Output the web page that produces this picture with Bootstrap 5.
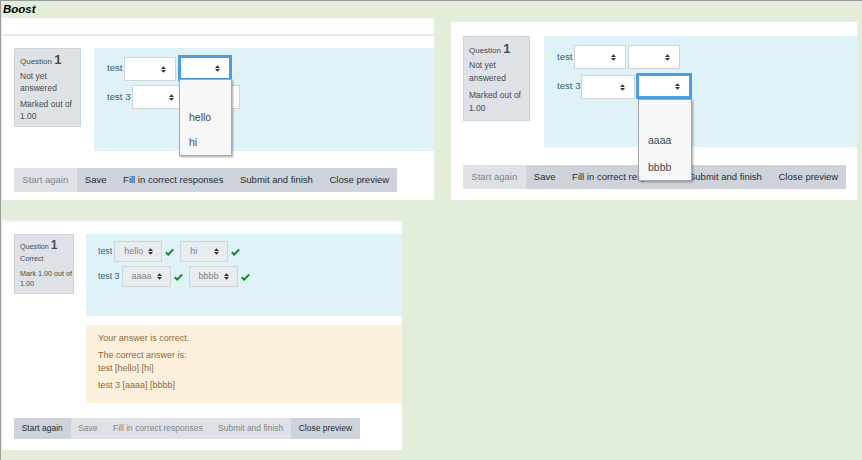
<!DOCTYPE html>
<html lang="en"><head><meta charset="utf-8"><title>Boost</title>
<link href="https://cdn.jsdelivr.net/npm/bootstrap@5.3.0/dist/css/bootstrap.min.css" rel="stylesheet">
<style>
html,body{height:460px;overflow:hidden}
body{background:#e2eeda;font-family:"Liberation Sans",Arial,sans-serif;color:#3a4047;position:relative;border-top:1px solid #9a9a9a;border-left:1px solid #9a9a9a}
.ttl{font:italic bold 11.5px/17px "Liberation Sans",sans-serif;color:#000;padding-left:2px;margin:0;height:17px}
.toprow{height:202px}
.pan{background:#fff;position:relative}
.p1{width:432px;height:182px;margin-left:1px;border-top:16px solid #fff}
.p1 .rule{height:2px;background:#e6e8ea}
.p1 .inner{padding:12px 0 0 12px}
.p2{width:406px;height:178px;margin-left:17px;margin-top:4px;padding:14px 0 0 12px}
.p3{width:400px;height:230px;margin-left:1px;border-top:2px solid #eef0f2;padding:12px 0 0 12px}
.infobox{background:#dee2e6;border:1px solid #ced4da;font-size:8.5px;line-height:12px;width:67px;height:79px;padding:4px 3px 0 5px;flex:none;align-self:flex-start;color:#454b52}
.p2 .infobox{height:85px;line-height:12.5px;padding-top:5px}
.infobox p{margin:0 0 4px}
.infobox .qn{font-size:8px;line-height:14px;margin-bottom:1px}
.p2 .infobox .qn{margin-bottom:1px}
.p2 .infobox p{margin-bottom:5px}
.infobox .qn b{font-size:13px}
.p3 .infobox{width:60px;height:60px;font-size:7.2px;line-height:10px;padding:3px 0 0 5px}
.p3 .infobox .qn{font-size:7.2px;margin-bottom:0}
.p3 .infobox .qn b{font-size:12px}
.p3 .infobox p{margin-bottom:5px}
.bluebox{background:#def2f8;color:#2f6473;font-size:9.6px;flex:1}
.p1 .bluebox{margin-left:13px;height:103px;padding:7px 0 0 13px}
.p2 .bluebox{margin-left:14px;height:111px;padding:9px 0 0 13px}
.p3 .bluebox{height:82px;padding:7px 0 0 12px;font-size:8.8px}
.body3{margin-left:12px;flex:1}
.qline{display:flex;align-items:center;gap:2px}
.qline.tight{gap:1px}
.sel.form-select{width:52px;height:24px;align-self:flex-end;border:1px solid #ced4da;border-radius:0;padding:0 0 0 6px;font-size:10px;color:#6a7178;background-color:#fff;box-shadow:none;flex:none;background-image:url("data:image/svg+xml,%3Csvg xmlns='http://www.w3.org/2000/svg' width='6' height='8'%3E%3Cpath d='M0 3.3L3 .3 6 3.3zM0 4.7L3 7.7 6 4.7z' fill='%23333'/%3E%3C/svg%3E");background-repeat:no-repeat;background-position:right 9px center;background-size:5px 7px}
.sel.focused{border:3px solid #4a9de0;height:26px;width:54px}
.p2 .sel.focused{width:56px}
.p1 .sel.short{width:54px}
.p2 .sel.first{width:54px}
.p3 .sel.form-select{width:48px;height:21px;background-color:#e9ecef;font-size:9px;padding-left:9px;opacity:1;color:#7c838a;background-position:right 8px center}
.p3 .sel.wide{width:49px}
.ok{color:#1c7f2b;margin-left:1px;margin-right:4px;flex:none}
.dropbox{position:absolute;background:#f7f7f7;border:1px solid #a8a8a8;box-shadow:1px 1px 2px rgba(0,0,0,.35);font-size:10.5px;color:#44484f;padding-top:25px;z-index:3}
.dropbox div{padding:0 9px;height:25px;line-height:25px}
.p1 .dropbox{left:177px;top:45px;width:53px;height:77px}
.p2 .dropbox{left:187px;top:77px;width:54px;height:82px;padding-top:28px}
.p2 .dropbox div{height:27px;line-height:25px}
.btnrow{display:flex}
.btnrow .btn{border:0;border-radius:0;background:#ced3db;color:#262c33;font-size:9.5px;line-height:24px;padding:0 8.3px;height:24px;white-space:nowrap;opacity:1}
.btnrow .btn.off{background:#dee2e6;color:#7e858c}
.p1 .btnrow{margin-top:17px}
.p2 .btnrow{margin-top:18px}
.p3 .btnrow .btn{font-size:8.5px;line-height:21px;height:21px;padding:0 7.7px}
.feedback{background:#fcefdc;color:#8a6d3b;font-size:9px;line-height:13px;height:78px;margin-top:9px;padding:7px 12px}
.feedback p{margin:0 0 4px}
.p3 .btnrow{margin-top:15px}
.greenmark{position:absolute;left:-1px;top:431px;width:1px;height:19px;background:#1f7a45}
</style></head>
<body>
<p class="ttl">Boost</p>
<div class="d-flex toprow">
 <div class="pan p1">
  <div class="rule"></div>
  <div class="inner">
   <div class="d-flex">
    <div class="infobox"><p class="qn">Question <b>1</b></p><p>Not yet answered</p><p>Marked out of 1.00</p></div>
    <div class="bluebox">
     <div class="qline">test <select class="form-select sel"><option></option></select><select class="form-select sel focused"><option></option></select></div>
     <div class="qline mt-1">test 3 <select class="form-select sel"><option></option></select><select class="form-select sel short"><option></option></select></div>
    </div>
   </div>
   <div class="btnrow"><button class="btn off" type="button">Start again</button><button class="btn" type="button">Save</button><button class="btn" type="button">Fill in correct responses</button><button class="btn" type="button">Submit and finish</button><button class="btn" type="button">Close preview</button></div>
  </div>
  <div class="dropbox"><div>hello</div><div>hi</div></div>
 </div>
 <div class="pan p2">
  <div class="d-flex">
   <div class="infobox"><p class="qn">Question <b>1</b></p><p>Not yet answered</p><p>Marked out of 1.00</p></div>
   <div class="bluebox">
    <div class="qline">test <select class="form-select sel"><option></option></select><select class="form-select sel"><option></option></select></div>
    <div class="qline tight mt-1">test 3 <select class="form-select sel first"><option></option></select><select class="form-select sel focused"><option></option></select></div>
   </div>
  </div>
  <div class="btnrow"><button class="btn off" type="button">Start again</button><button class="btn" type="button">Save</button><button class="btn" type="button">Fill in correct responses</button><button class="btn" type="button">Submit and finish</button><button class="btn" type="button">Close preview</button></div>
  <div class="dropbox"><div>aaaa</div><div>bbbb</div></div>
 </div>
</div>
<div class="pan p3">
 <div class="d-flex">
  <div class="infobox"><p class="qn">Question <b>1</b></p><p>Correct</p><p>Mark 1.00 out of 1.00</p></div>
  <div class="body3">
   <div class="bluebox">
    <div class="qline">test <select class="form-select sel" disabled><option>hello</option></select><svg class="ok" width="9" height="8" viewBox="0 0 9 8"><path d="M.8 4.3l2.4 2.3L8.2 1.4" fill="none" stroke="currentColor" stroke-width="2"/></svg><select class="form-select sel" disabled><option>hi</option></select><svg class="ok" width="9" height="8" viewBox="0 0 9 8"><path d="M.8 4.3l2.4 2.3L8.2 1.4" fill="none" stroke="currentColor" stroke-width="2"/></svg></div>
    <div class="qline mt-1">test 3 <select class="form-select sel wide" disabled><option>aaaa</option></select><svg class="ok" width="9" height="8" viewBox="0 0 9 8"><path d="M.8 4.3l2.4 2.3L8.2 1.4" fill="none" stroke="currentColor" stroke-width="2"/></svg><select class="form-select sel wide" disabled><option>bbbb</option></select><svg class="ok" width="9" height="8" viewBox="0 0 9 8"><path d="M.8 4.3l2.4 2.3L8.2 1.4" fill="none" stroke="currentColor" stroke-width="2"/></svg></div>
   </div>
   <div class="feedback"><p>Your answer is correct.</p><p class="mb-0">The correct answer is:</p><p>test [hello] [hi]</p><p>test 3 [aaaa] [bbbb]</p></div>
  </div>
 </div>
 <div class="btnrow"><button class="btn" type="button">Start again</button><button class="btn off" type="button">Save</button><button class="btn off" type="button">Fill in correct responses</button><button class="btn off" type="button">Submit and finish</button><button class="btn" type="button">Close preview</button></div>
</div>
<div class="greenmark"></div>
</body></html>
